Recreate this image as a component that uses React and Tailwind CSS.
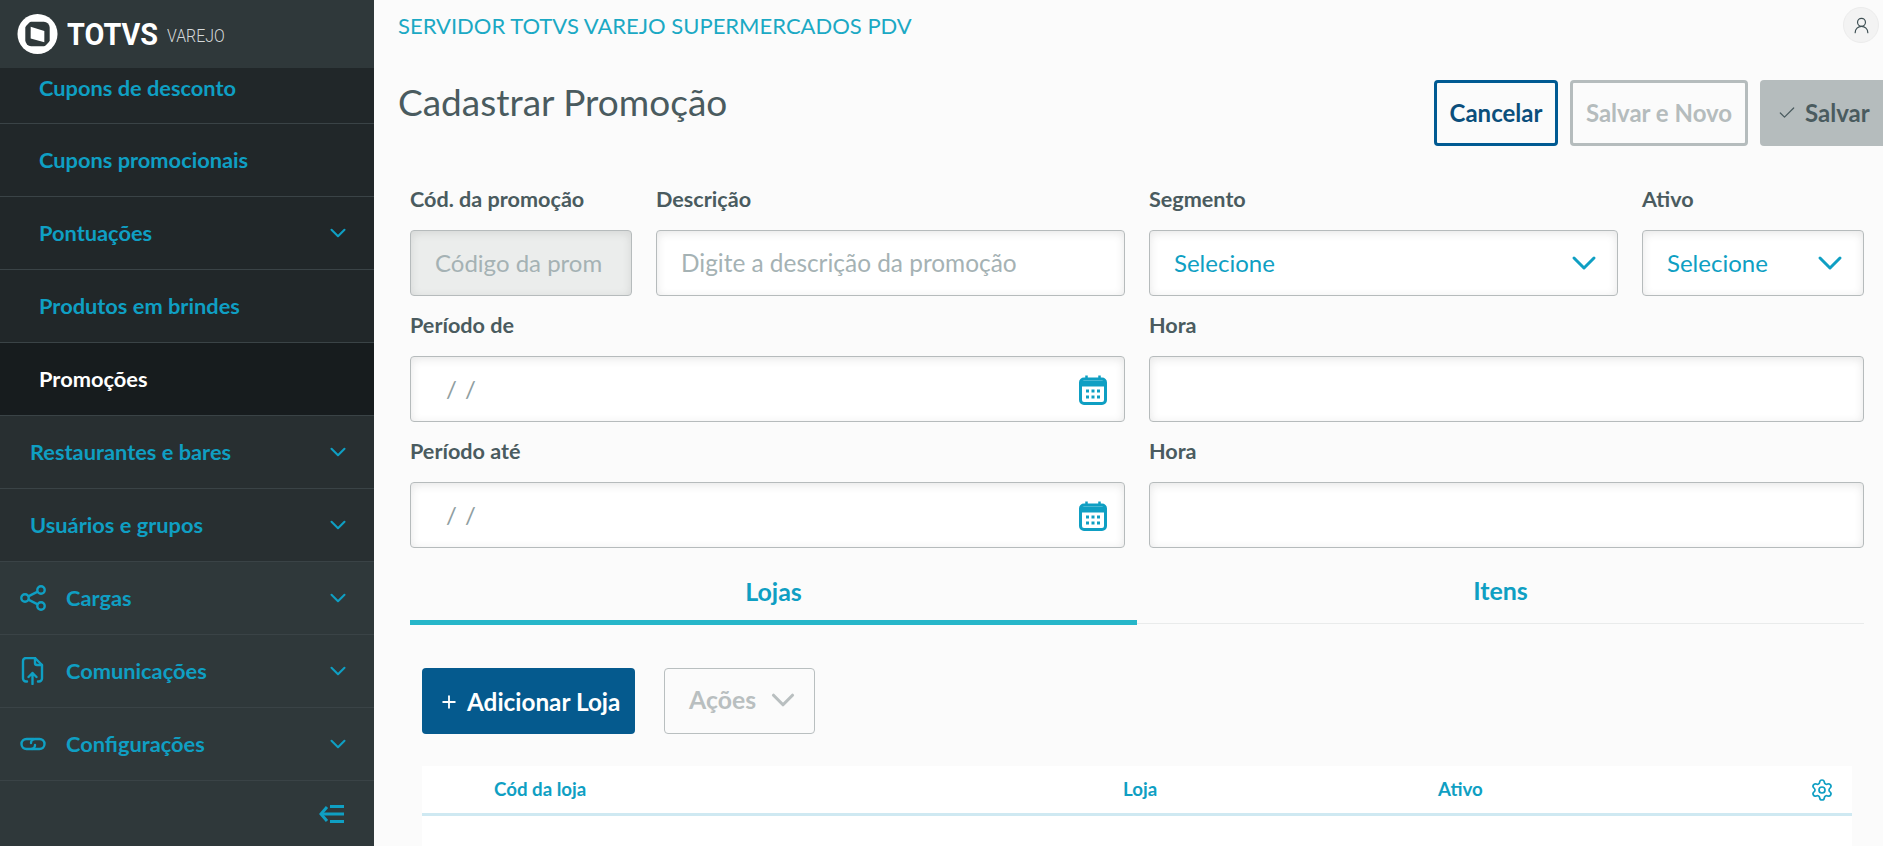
import React from "react";
import { ChevronDown, Settings, UserRound, Check, Plus } from "lucide-react";

const font = { fontFamily: '"Lato", "Open Sans", sans-serif' };

function Logo() {
  return (
    <div className="h-[68px] shrink-0 bg-[#2f383a] flex items-center pl-[17px]">
      <svg width="41" height="42" viewBox="0 0 42 42" className="shrink-0">
        <circle cx="21" cy="21" r="20.5" fill="#fff" />
        <rect x="8.5" y="8.5" width="25" height="25" rx="6" fill="#2f383a" />
        <path d="M14 13.5 L28 18 L28 29.5 L14 25.5 Z" fill="#fff" />
        <path d="M8 8 L14 8 L8 14 Z M34 34 L28 34 L34 28 Z" fill="#fff" />
      </svg>
      <span className="ml-[9px] text-white text-[32px] font-bold leading-none scale-x-[.9] origin-left" style={{ fontFamily: "Roboto, sans-serif" }}>TOTVS</span>
      <span className="-ml-[1px] text-[#d5d9da] text-[18px] font-light leading-none pt-[4px] scale-x-[.88] origin-left" style={{ fontFamily: "Roboto, sans-serif" }}>VAREJO</span>
    </div>
  );
}

function ShareIcon() {
  return (
    <svg width="26" height="26" viewBox="0 0 26 26" fill="none" stroke="#0f9fc3" strokeWidth="2.4">
      <circle cx="5" cy="13" r="3.7" />
      <circle cx="21" cy="5" r="3.7" />
      <circle cx="21" cy="21" r="3.7" />
      <path d="M8.3 11.3 L17.7 6.7 M8.3 14.7 L17.7 19.3" />
    </svg>
  );
}

function FileIcon() {
  return (
    <svg width="26" height="28" viewBox="0 0 26 28" fill="none" stroke="#0f9fc3" strokeWidth="2.4" strokeLinecap="round" strokeLinejoin="round">
      <path d="M7 24.5 H6 a3 3 0 0 1 -3 -3 V4 a3 3 0 0 1 3 -3 H15 L22 8 V21.5 a3 3 0 0 1 -3 3 H18" />
      <path d="M15 1 V6 a2 2 0 0 0 2 2 H22" />
      <path d="M12.5 27 V16 M8.5 20 L12.5 16 L16.5 20" />
    </svg>
  );
}

function LinkIcon() {
  return (
    <svg width="26" height="14" viewBox="0 0 26 14" fill="none" stroke="#0f9fc3" strokeWidth="2.4" strokeLinecap="round">
      <path d="M14 2 H6.5 a5 5 0 0 0 0 10 H11 a4 4 0 0 0 4 -4" />
      <path d="M12 12 H19.5 a5 5 0 0 0 0 -10 H15 a4 4 0 0 0 -4 4" />
    </svg>
  );
}

function Row({ label, indent, icon: Icon, chevron, active, bg, first }) {
  return (
    <div className={`${first ? "h-[56px] items-start pt-[4px]" : "h-[73px] items-center"} flex shrink-0 border-b border-[#3a4346] ${bg} ${indent}`}>
      {Icon && <span className="w-[46px] shrink-0 flex"><Icon /></span>}
      <span className={`text-[21.8px] font-bold ${active ? "text-white" : "text-[#0f9fc3]"}`}>{label}</span>
      {chevron && <ChevronDown size={26} strokeWidth={1.9} className="ml-auto mr-[23px] text-[#0f9fc3]" />}
    </div>
  );
}

function Sidebar() {
  return (
    <aside className="w-[374px] shrink-0 h-full bg-[#2f383a] flex flex-col">
      <Logo />
      <Row first label="Cupons de desconto" indent="pl-[39px]" bg="bg-[#212729]" />
      <Row label="Cupons promocionais" indent="pl-[39px]" bg="bg-[#212729]" />
      <Row label="Pontuações" indent="pl-[39px]" bg="bg-[#212729]" chevron />
      <Row label="Produtos em brindes" indent="pl-[39px]" bg="bg-[#212729]" />
      <Row label="Promoções" indent="pl-[39px]" bg="bg-[#171c1e]" active />
      <Row label="Restaurantes e bares" indent="pl-[30px]" bg="bg-[#282f31]" chevron />
      <Row label="Usuários e grupos" indent="pl-[30px]" bg="bg-[#282f31]" chevron />
      <Row label="Cargas" indent="pl-[20px]" icon={ShareIcon} chevron bg="bg-[#2f383a]" />
      <Row label="Comunicações" indent="pl-[20px]" icon={FileIcon} chevron bg="bg-[#2f383a]" />
      <Row label="Configurações" indent="pl-[20px]" icon={LinkIcon} chevron bg="bg-[#2f383a]" />
      <div className="flex-1 flex items-center justify-end pr-[29px]">
        <svg width="26" height="20" viewBox="0 0 26 20" fill="none" stroke="#0f9fc3" strokeWidth="3">
          <path d="M8 3 L2 10 L8 17" />
          <path d="M2 10 H25 M11 2.5 H25 M11 17.5 H25" />
        </svg>
      </div>
    </aside>
  );
}

function Field({ label, width, children }) {
  return (
    <div className={width}>
      <div className="h-[30px] text-[21.6px] font-bold text-[#4a5b5f] leading-[26px] mb-[14px]">{label}</div>
      {children}
    </div>
  );
}

const boxCls = "h-[66px] rounded-[4px] border border-[#b6bbbc] shadow-[inset_0_2px_10px_rgba(0,0,0,0.1)] flex items-center";

function Calendar() {
  return (
    <svg width="28" height="30" viewBox="0 0 28 30" fill="none" stroke="#0f9fc3" className="ml-auto mr-[17px] mt-[2px]">
      <rect x="1.5" y="4" width="25" height="24.5" rx="3.5" strokeWidth="3" />
      <path d="M1.5 8.5 H26.5" strokeWidth="6" />
      <path d="M7.5 0.5 V5 M20.5 0.5 V5" strokeWidth="2.5" />
      <path d="M7 16 H10 M12.5 16 H15.5 M18 16 H21 M7 22 H10 M12.5 22 H15.5 M18 22 H21" strokeWidth="3" />
    </svg>
  );
}

function Select() {
  return (
    <div className={`${boxCls} bg-white text-[24px] text-[#0f9fc3] pl-[24px] pr-[13px]`}>
      <span>Selecione</span>
      <ChevronDown size={40} strokeWidth={1.8} className="ml-auto" />
    </div>
  );
}

function DateInput() {
  return (
    <div className={`${boxCls} bg-white text-[24px] pl-[35px] text-[#8f9ea1]`}>
      <span className="tracking-[1px]">/ /</span>
      <Calendar />
    </div>
  );
}

function Main() {
  return (
    <main className="flex-1 min-w-0 h-full overflow-hidden bg-[#fbfbfb] flex flex-col">
      <header className="h-[52px] shrink-0 flex items-center justify-between pl-[24px] pr-[4px] pb-[2px]">
        <span className="text-[22px] text-[#1ba9c4]">SERVIDOR TOTVS VAREJO SUPERMERCADOS PDV</span>
        <span className="w-[36px] h-[36px] rounded-full bg-[#f3f3f3] border border-[#ececec] flex items-center justify-center">
          <UserRound size={19} strokeWidth={1.5} className="text-[#3f5054]" />
        </span>
      </header>
      <div className="h-[94px] shrink-0 flex items-start justify-between pl-[24px] pt-[28px]">
        <h1 className="text-[37px] leading-[46px] text-[#4a5b5f] font-normal -mt-[1px]">Cadastrar Promoção</h1>
        <div className="flex gap-[12px] items-start">
          <button className="h-[66px] w-[124px] rounded-[4px] border-[3px] border-[#005a92] text-[#0b4f7c] text-[24px] font-bold">Cancelar</button>
          <button className="h-[66px] w-[178px] rounded-[4px] border-[3px] border-[#b5bcbd] text-[#b5bcbd] text-[24px] font-bold">Salvar e Novo</button>
          <button className="h-[66px] w-[123px] rounded-l-[4px] bg-[#b5bcbd] text-[#4a5b5f] text-[24px] font-bold flex items-center pl-[17px] gap-[8px]">
            <Check size={20} strokeWidth={1.5} />Salvar
          </button>
        </div>
      </div>
      <div className="pl-[36px] pr-[19px] mt-[40px]">
        <div className="flex gap-[24px] h-[126px]">
          <Field label="Cód. da promoção" width="w-[222px]">
            <div className={`${boxCls} bg-[#ebedec] text-[24px] text-[#a5b2b4] pl-[24px] overflow-hidden whitespace-nowrap`}>Código da prom</div>
          </Field>
          <Field label="Descrição" width="w-[469px]">
            <div className={`${boxCls} bg-white text-[24.4px] text-[#a5b2b4] pl-[24px]`}>Digite a descrição da promoção</div>
          </Field>
          <Field label="Segmento" width="w-[469px]">
            <Select />
          </Field>
          <Field label="Ativo" width="w-[222px]">
            <Select />
          </Field>
        </div>
        <div className="flex gap-[24px] h-[126px]">
          <Field label="Período de" width="w-[715px]"><DateInput /></Field>
          <Field label="Hora" width="w-[715px]"><div className={`${boxCls} bg-white`} /></Field>
        </div>
        <div className="flex gap-[24px] h-[126px]">
          <Field label="Período até" width="w-[715px]"><DateInput /></Field>
          <Field label="Hora" width="w-[715px]"><div className={`${boxCls} bg-white`} /></Field>
        </div>
        <div className="flex h-[61px] -mt-[1px] border-b border-[#e9ebeb]">
          <div className="w-[727px] h-[62px] border-b-[5px] border-[#26b6c9] flex items-center justify-center text-[25px] font-bold text-[#0f9fc3]">Lojas</div>
          <div className="flex-1 pb-[4px] flex items-center justify-center text-[25px] font-bold text-[#0f9fc3]">Itens</div>
        </div>
      </div>
      <div className="pl-[48px] pr-[31px] mt-[44px]">
        <div className="flex gap-[29px]">
          <button className="h-[66px] w-[213px] rounded-[4px] bg-[#055a8e] text-white text-[24.3px] font-bold flex items-center pl-[17px] gap-[8px] pt-[2px]">
            <Plus size={20} strokeWidth={2.2} />Adicionar Loja
          </button>
          <button className="h-[66px] w-[151px] rounded-[4px] border border-[#b9bfc0] text-[#b9bfc0] text-[24.8px] font-bold flex items-center pl-[24px] gap-[8px] pb-[2px]">
            Ações<ChevronDown size={38} strokeWidth={2} />
          </button>
        </div>
        <div className="mt-[32px] h-[200px] bg-white">
          <div className="h-[50px] border-b-[3px] border-[#cfe9f2] flex items-center text-[18.7px] font-bold text-[#0f9fc3] relative">
            <span className="ml-[72px] w-[629px]">Cód da loja</span>
            <span className="w-[315px]">Loja</span>
            <span>Ativo</span>
            <Settings size={24} strokeWidth={1.7} className="ml-auto mr-[18px]" />
          </div>
        </div>
      </div>
    </main>
  );
}

export default function App() {
  return (
    <div className="w-[1883px] h-[846px] flex overflow-hidden" style={font}>
      <Sidebar />
      <Main />
    </div>
  );
}
